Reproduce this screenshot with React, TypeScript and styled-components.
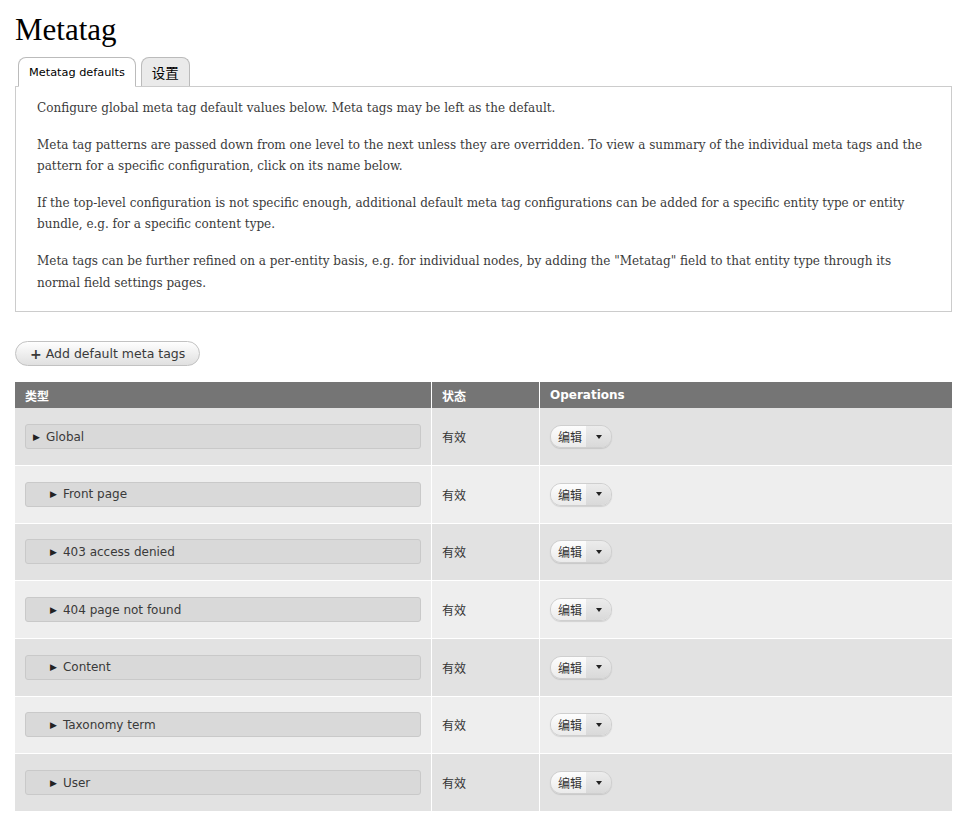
import React from 'react';
import styled, { createGlobalStyle } from 'styled-components';

const GlobalStyle = createGlobalStyle`
  body {
    margin: 0;
    background: #fff;
    color: #3b3b3b;
    font-family: "DejaVu Serif", Georgia, serif;
  }
`;

const sans = `"DejaVu Sans", Verdana, "Noto Sans CJK SC", sans-serif`;

const Page = styled.div`
  padding: 11px 18px 0 15px;
`;

const Title = styled.h1`
  margin: 0 0 9px;
  font-family: "Liberation Serif", Georgia, serif;
  font-weight: normal;
  font-size: 31px;
  line-height: 37px;
  color: #000;
`;

const Tabs = styled.ul`
  display: flex;
  gap: 5px;
  margin: 0;
  padding: 0 0 0 3px;
  list-style: none;
`;

const Tab = styled.li<{ $active?: boolean; $cjk?: boolean }>`
  height: 28px;
  margin-bottom: ${({ $active }) => ($active ? '-1px' : '0')};
  padding: 0 10px;
  display: flex;
  align-items: center;
  border: 1px solid #bbb;
  border-bottom: ${({ $active }) => ($active ? '1px solid #fff' : 'none')};
  border-radius: 8px 8px 0 0;
  background: ${({ $active }) => ($active ? '#fff' : '#eaeaea')};
  font-family: ${sans};
  font-size: ${({ $cjk }) => ($cjk ? '13.5px' : '11.3px')};
  color: #000;
  position: relative;
  z-index: 1;
`;

const Panel = styled.div`
  border: 1px solid #ccc;
  padding: 11px 21px 9px;
  margin-bottom: 29px;
`;

const Para = styled.p`
  margin: 0 0 15px;
  font-size: 12px;
  line-height: 21.6px;
  &:last-child { margin-bottom: 8px; }
`;

const AddButton = styled.button`
  display: inline-flex;
  align-items: center;
  height: 25px;
  padding: 0 14px;
  border: 1px solid #c2c2c2;
  border-radius: 13px;
  background: linear-gradient(#fefefe, #e0e0e0);
  font-family: ${sans};
  font-size: 12.5px;
  color: #3a3a3a;
  margin-bottom: 16px;
  b { font-weight: bold; margin-right: 4px; font-size: 14px; }
`;

const Table = styled.table`
  width: 100%;
  border-collapse: collapse;
  font-family: ${sans};
  font-size: 12px;
`;

const Th = styled.th<{ $w?: string }>`
  background: #757575;
  color: #fff;
  text-align: left;
  font-weight: bold;
  height: 26px;
  padding: 0 10px;
  width: ${({ $w }) => $w || 'auto'};
  border-right: 1px solid #fff;
  &:last-child { border-right: none; }
`;

const Tr = styled.tr<{ $odd: boolean }>`
  background: ${({ $odd }) => ($odd ? '#e2e2e2' : '#eeeeee')};
  border-bottom: 1px solid #fff;
`;

const Td = styled.td`
  height: 56.7px;
  padding: 0 10px;
  border-right: 1px solid #fff;
  color: #333;
  &:last-child { border-right: none; }
`;

const Summary = styled.div<{ $indent: boolean }>`
  height: 23px;
  display: flex;
  align-items: center;
  padding-left: ${({ $indent }) => ($indent ? '24px' : '7px')};
  background: #d9d9d9;
  border: 1px solid #c9c9c9;
  border-radius: 3px;
  color: #3a3a3a;
  font-size: 12px;
`;

const Arrow = styled.span`
  font-size: 9px;
  margin-right: 6px;
  color: #222;
`;

const DropButton = styled.div`
  display: inline-flex;
  height: 21px;
  border: 1px solid #cfcfcf;
  border-radius: 11px;
  overflow: hidden;
  box-shadow: 0 1px 1px rgba(0, 0, 0, 0.12);
`;

const DropMain = styled.span`
  display: flex;
  align-items: center;
  padding: 0 4px 0 7px;
  background: linear-gradient(#fdfdfd, #ebebeb);
  color: #333;
  font-size: 12px;
`;

const DropToggle = styled.span`
  display: flex;
  align-items: center;
  justify-content: center;
  width: 25px;
  background: linear-gradient(#ececec, #d9d9d9);
  &::after {
    content: '';
    border-left: 3px solid transparent;
    border-right: 3px solid transparent;
    border-top: 4px solid #222;
  }
`;

const rows: { name: string; indent: boolean }[] = [
  { name: 'Global', indent: false },
  { name: 'Front page', indent: true },
  { name: '403 access denied', indent: true },
  { name: '404 page not found', indent: true },
  { name: 'Content', indent: true },
  { name: 'Taxonomy term', indent: true },
  { name: 'User', indent: true },
];

const App = () => (
  <Page>
    <GlobalStyle />
    <Title>Metatag</Title>
    <Tabs>
      <Tab $active>Metatag defaults</Tab>
      <Tab $cjk>设置</Tab>
    </Tabs>
    <Panel>
      <Para>Configure global meta tag default values below. Meta tags may be left as the default.</Para>
      <Para>
        Meta tag patterns are passed down from one level to the next unless they are overridden. To view a summary of
        the individual meta tags and the pattern for a specific configuration, click on its name below.
      </Para>
      <Para>
        If the top-level configuration is not specific enough, additional default meta tag configurations can be added
        for a specific entity type or entity bundle, e.g. for a specific content type.
      </Para>
      <Para>
        Meta tags can be further refined on a per-entity basis, e.g. for individual nodes, by adding the "Metatag"
        field to that entity type through its normal field settings pages.
      </Para>
    </Panel>
    <AddButton>
      <b>+</b>Add default meta tags
    </AddButton>
    <Table>
      <thead>
        <tr>
          <Th $w="396px">类型</Th>
          <Th $w="87px">状态</Th>
          <Th>Operations</Th>
        </tr>
      </thead>
      <tbody>
        {rows.map((r, i) => (
          <Tr key={r.name} $odd={i % 2 === 0}>
            <Td>
              <Summary $indent={r.indent}>
                <Arrow>▶</Arrow>
                {r.name}
              </Summary>
            </Td>
            <Td>有效</Td>
            <Td>
              <DropButton>
                <DropMain>编辑</DropMain>
                <DropToggle />
              </DropButton>
            </Td>
          </Tr>
        ))}
      </tbody>
    </Table>
  </Page>
);

export default App;
